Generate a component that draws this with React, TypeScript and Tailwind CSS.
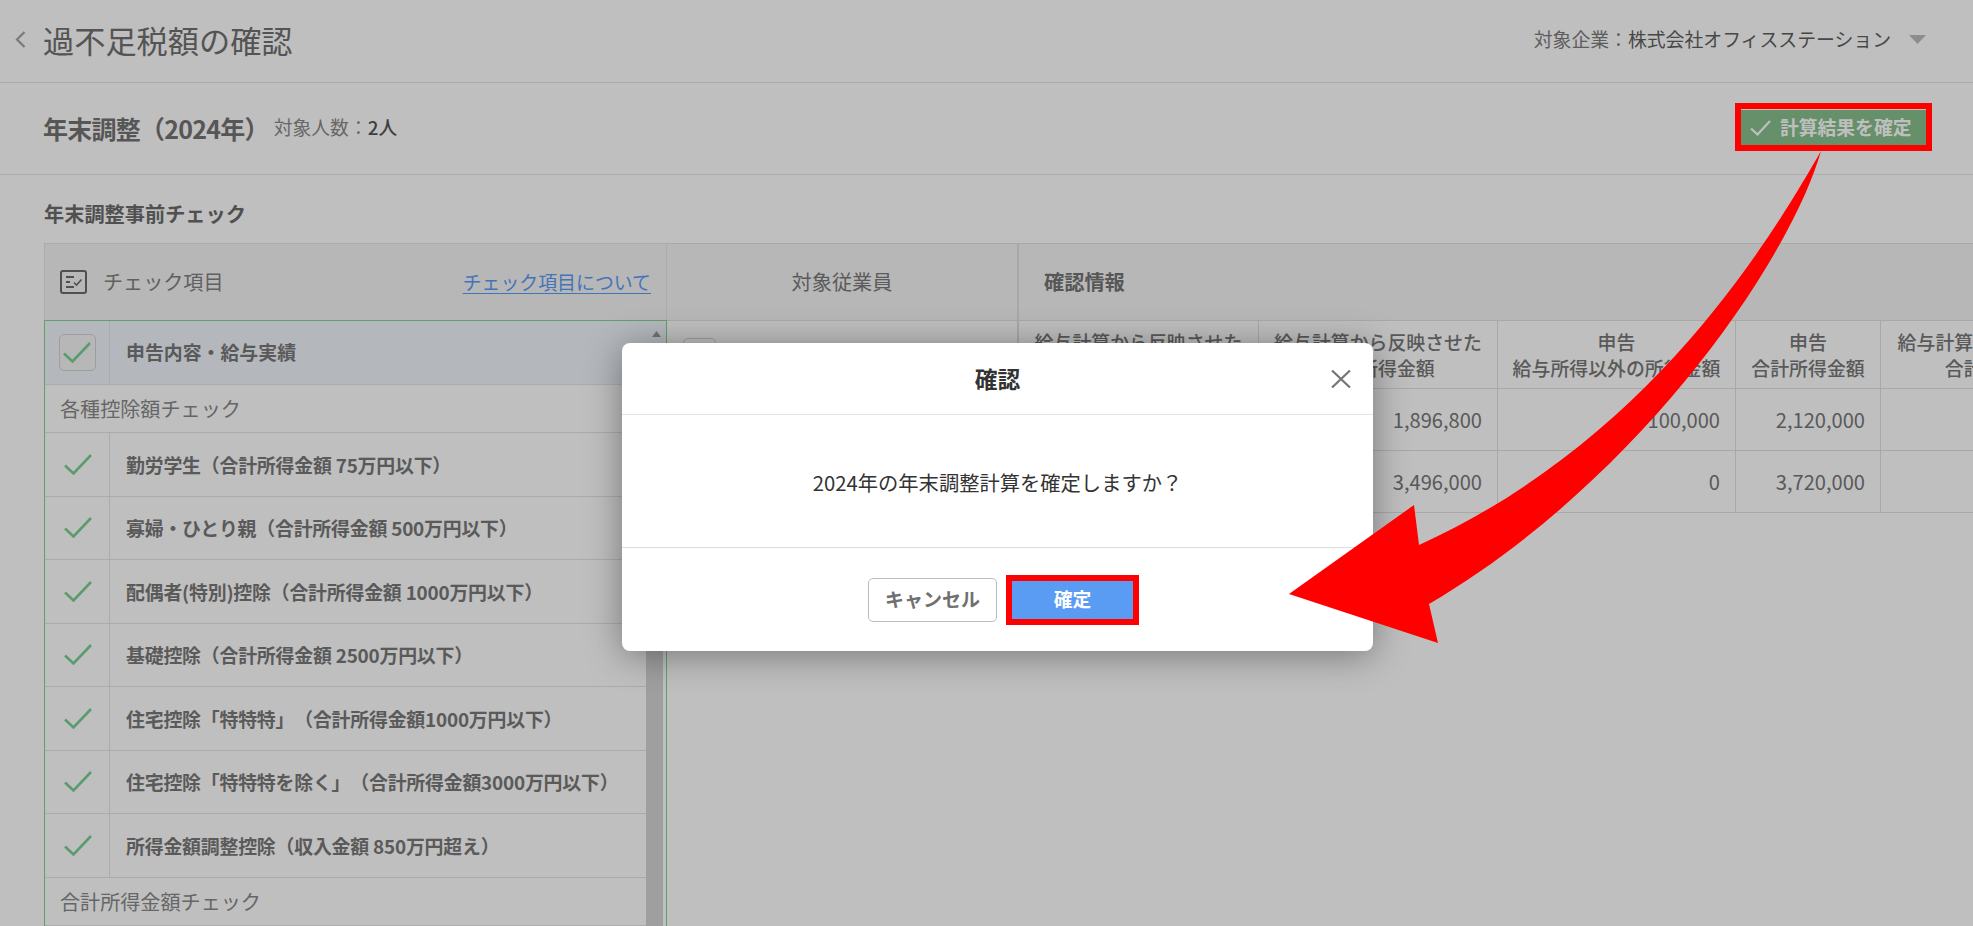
import React from "react";

const FONT = { fontFamily: '"Noto Sans CJK JP", "Noto Sans", sans-serif' };

function Check({ className = "" }: { className?: string }) {
  return (
    <svg width="28" height="21" viewBox="0 0 28 21" fill="none" className={className}>
      <path d="M1 11.5 L9.5 19.5 L27 1" stroke="#7ad095" strokeWidth="2.6" />
    </svg>
  );
}

const rowsA = [
  "勤労学生（合計所得金額 75万円以下）",
  "寡婦・ひとり親（合計所得金額 500万円以下）",
  "配偶者(特別)控除（合計所得金額 1000万円以下）",
  "基礎控除（合計所得金額 2500万円以下）",
  "住宅控除「特特特」（合計所得金額1000万円以下）",
  "住宅控除「特特特を除く」（合計所得金額3000万円以下）",
  "所得金額調整控除（収入金額 850万円超え）",
];

function CheckRow({ label }: { label: string }) {
  return (
    <div className="flex h-[63.5px] border-b border-[#e4e4e4]">
      <div className="flex w-[65px] shrink-0 items-center justify-center border-r border-[#e4e4e4] pl-[2px]">
        <Check />
      </div>
      <div className="flex items-center pl-4 pt-[1px] text-[18.9px] font-bold tracking-[-0.2px] text-[#787878] whitespace-nowrap">{label}</div>
    </div>
  );
}

function GroupRow({ label }: { label: string }) {
  return (
    <div className="flex h-[48px] items-center border-b border-[#e4e4e4] pl-[15px] pt-[2px] text-[20.1px] text-[#888888]">{label}</div>
  );
}

const heads = [
  ["給与計算から反映させた", "給与収入金額"],
  ["給与計算から反映させた", "給与所得金額"],
  ["申告", "給与所得以外の所得金額"],
  ["申告", "合計所得金額"],
  ["給与計算から反映させた", "合計所得金額"],
];
const vals = [
  ["", "1,896,800", "100,000", "2,120,000", ""],
  ["", "3,496,000", "0", "3,720,000", ""],
];
const COLS = "grid grid-cols-[240px_239px_238px_145px_242px] w-[1104px]";

export default function App() {
  return (
    <div style={FONT} className="relative h-[926px] w-[1973px] overflow-hidden bg-white [text-spacing-trim:space-all]">
      {/* page */}
      <header className="flex h-[83px] items-center justify-between border-b border-[#e4e4e4] pb-[3px] pl-[15px] pr-[47px]">
        <div className="flex items-center">
          <svg width="11" height="17" viewBox="0 0 11 17" fill="none">
            <path d="M9.5 1 L2 8.5 L9.5 16" stroke="#a3a3a3" strokeWidth="2.2" />
          </svg>
          <h1 className="ml-[17px] text-[31.2px] leading-[40px] text-[#707070]">過不足税額の確認</h1>
        </div>
        <div className="flex items-center text-[18.85px] text-[#7d7d7d]">
          <span>対象企業：</span>
          <span className="text-[#5f5f5f]">株式会社オフィスステーション</span>
          <svg width="17" height="9" viewBox="0 0 17 9" className="ml-[18px]">
            <path d="M0 0 H17 L8.5 9 Z" fill="#bdbdbd" />
          </svg>
        </div>
      </header>

      <div className="flex h-[92px] items-center justify-between border-b border-[#e4e4e4] pb-[2px] pl-[43px] pr-[47px]">
        <div className="flex items-center">
          <span className="text-[25px] font-bold leading-[34px] tracking-[-0.75px] text-[#737373]">年末調整（2024年）</span>
          <span className="ml-[5px] text-[18.8px] text-[#8a8a8a]">対象人数：<b className="font-medium text-[#555555]">2人</b></span>
        </div>
        <button className="flex h-[36px] w-[185px] items-center gap-[9px] bg-[#87c08d] pl-[9px] text-[18.8px] font-bold text-white">
          <svg width="21" height="16" viewBox="0 0 21 16" fill="none">
            <path d="M1 8.5 L7.5 14.5 L20 1" stroke="#ffffff" strokeWidth="2.2" />
          </svg>
          計算結果を確定
        </button>
      </div>

      <section className="pt-[25px]">
        <h2 className="pl-[44px] text-[20.2px] font-bold leading-[28px] text-[#6b6b6b]">年末調整事前チェック</h2>
        <div className="mt-[15px] flex pl-[44px]">
          {/* left panel */}
          <div className="w-[623px] shrink-0">
            <div className="flex h-[77px] items-center justify-between border-x border-t border-[#e4e4e4] bg-[#f5f5f5] pl-[15px] pr-[15px]">
              <div className="flex items-center gap-[16px]">
                <svg width="27" height="24" viewBox="0 0 27 24" fill="none" stroke="#6a6a6a" strokeWidth="2">
                  <rect x="1" y="1" width="25" height="22" rx="2" />
                  <path d="M6 7h8M6 12h4M6 17h8" />
                  <path d="M14 12.5l2.5 2.5 5-5.5" strokeWidth="1.6" />
                </svg>
                <span className="text-[20.1px] text-[#808080]">チェック項目</span>
              </div>
              <a className="text-[18.9px] text-[#5a9bf4] underline underline-offset-[3px]">チェック項目について</a>
            </div>
            <div className="flex border border-[#7fd692]">
              <div className="min-w-0 flex-1">
                <div className="flex h-[64px] border-b border-[#e4e4e4] bg-[#f1f6fd]">
                  <div className="flex w-[65px] shrink-0 items-center justify-center border-r border-[#e4e4e4]">
                    <div className="flex h-[37px] w-[37px] items-center justify-center rounded-[5px] border border-[#d2d2d2] bg-[#f4f5f6]">
                      <Check />
                    </div>
                  </div>
                  <div className="flex items-center pl-4 text-[18.9px] font-bold text-[#787878]">申告内容・給与実績</div>
                </div>
                <GroupRow label="各種控除額チェック" />
                {rowsA.map((r) => (
                  <CheckRow key={r} label={r} />
                ))}
                <GroupRow label="合計所得金額チェック" />
              </div>
              <div className="flex w-[20px] shrink-0 flex-col items-start">
                <div className="flex h-[25px] w-full items-center justify-center bg-[#f1f6fd] pt-[1px]">
                  <svg width="9" height="6" viewBox="0 0 9 6">
                    <path d="M0 6 H9 L4.5 0 Z" fill="#9a9a9a" />
                  </svg>
                </div>
                <div className="h-[640px] w-[17px] bg-[#d4d4d4]" />
              </div>
            </div>
          </div>

          {/* middle panel */}
          <div className="w-[352px] shrink-0">
            <div className="flex h-[77px] items-center justify-center border-r-2 border-t border-[#e0e0e0] bg-[#f5f5f5] text-[20.2px] text-[#7a7a7a]">対象従業員</div>
            <div className="h-[193px] border-r-2 border-t border-[#e0e0e0] pl-[16px] pt-[17px]">
              <div className="h-[37px] w-[33px] rounded-[5px] border border-[#d2d2d2]" />
            </div>
          </div>

          {/* right panel */}
          <div className="min-w-0 flex-1 overflow-hidden">
            <div className="flex h-[77px] items-center border-t border-[#e0e0e0] bg-[#f5f5f5] pl-[25px] text-[20.2px] font-bold text-[#747474]">確認情報</div>
            <div className={COLS + " h-[69px] border-y border-[#e0e0e0]"}>
              {heads.map((h, i) => (
                <div key={i} className="flex flex-col items-center justify-center border-r border-[#e0e0e0] text-[18.9px] font-medium leading-[26px] text-[#777777]">
                  <span>{h[0]}</span>
                  <span>{h[1]}</span>
                </div>
              ))}
            </div>
            {vals.map((row, r) => (
              <div key={r} className={COLS + " h-[62px] border-b border-[#e0e0e0]"}>
                {row.map((v, i) => (
                  <div key={i} className="flex items-center justify-end border-r border-[#e0e0e0] pr-[15px] pt-[1px] text-[20.1px] text-[#777777]">{v}</div>
                ))}
              </div>
            ))}
          </div>
        </div>
      </section>

      {/* dim overlay */}
      <div className="absolute inset-0 bg-black/25" />

      {/* dialog */}
      <div className="absolute left-[622px] top-[343px] flex h-[308px] w-[751px] flex-col rounded-[8px] bg-white shadow-[0_4px_36px_rgba(0,0,0,0.38)]">
        <div className="relative flex h-[72px] shrink-0 items-center justify-center border-b border-[#e3e3e3] pt-[1px] text-[22.8px] font-bold text-[#333333]">
          確認
          <svg width="20" height="18" viewBox="0 0 20 18" fill="none" className="absolute right-[22px] top-[27px]">
            <path d="M1 0.5 L19 17.5 M19 0.5 L1 17.5" stroke="#757575" strokeWidth="2.2" />
          </svg>
        </div>
        <div className="flex flex-1 items-center justify-center pt-[3px] text-[20.3px] text-[#333333]">2024年の年末調整計算を確定しますか？</div>
        <div className="flex h-[104px] shrink-0 items-center justify-center gap-[9px] border-t border-[#dcdcdc] pl-3">
          <button className="h-[44px] w-[129px] rounded-[5px] border-[1.5px] border-[#bbbbbb] text-[19px] font-bold text-[#707070]">キャンセル</button>
          <button className="h-[50px] w-[133px] border-[6px] border-[#ff0000] bg-[#5a9bf4] text-[18.8px] font-bold text-white">確定</button>
        </div>
      </div>

      {/* annotations */}
      <div className="absolute left-[1735px] top-[103px] h-[48px] w-[197px] border-[6px] border-[#ff0000]" />
      <svg className="absolute left-0 top-0" width="1973" height="926" viewBox="0 0 1973 926">
        <path
          d="M1821 151 C1770 240 1650 440 1419 545 L1414 505 L1289 594 L1438 643 L1429 604 C1640 480 1790 260 1821 151 Z"
          fill="#ff0000"
        />
      </svg>
    </div>
  );
}
